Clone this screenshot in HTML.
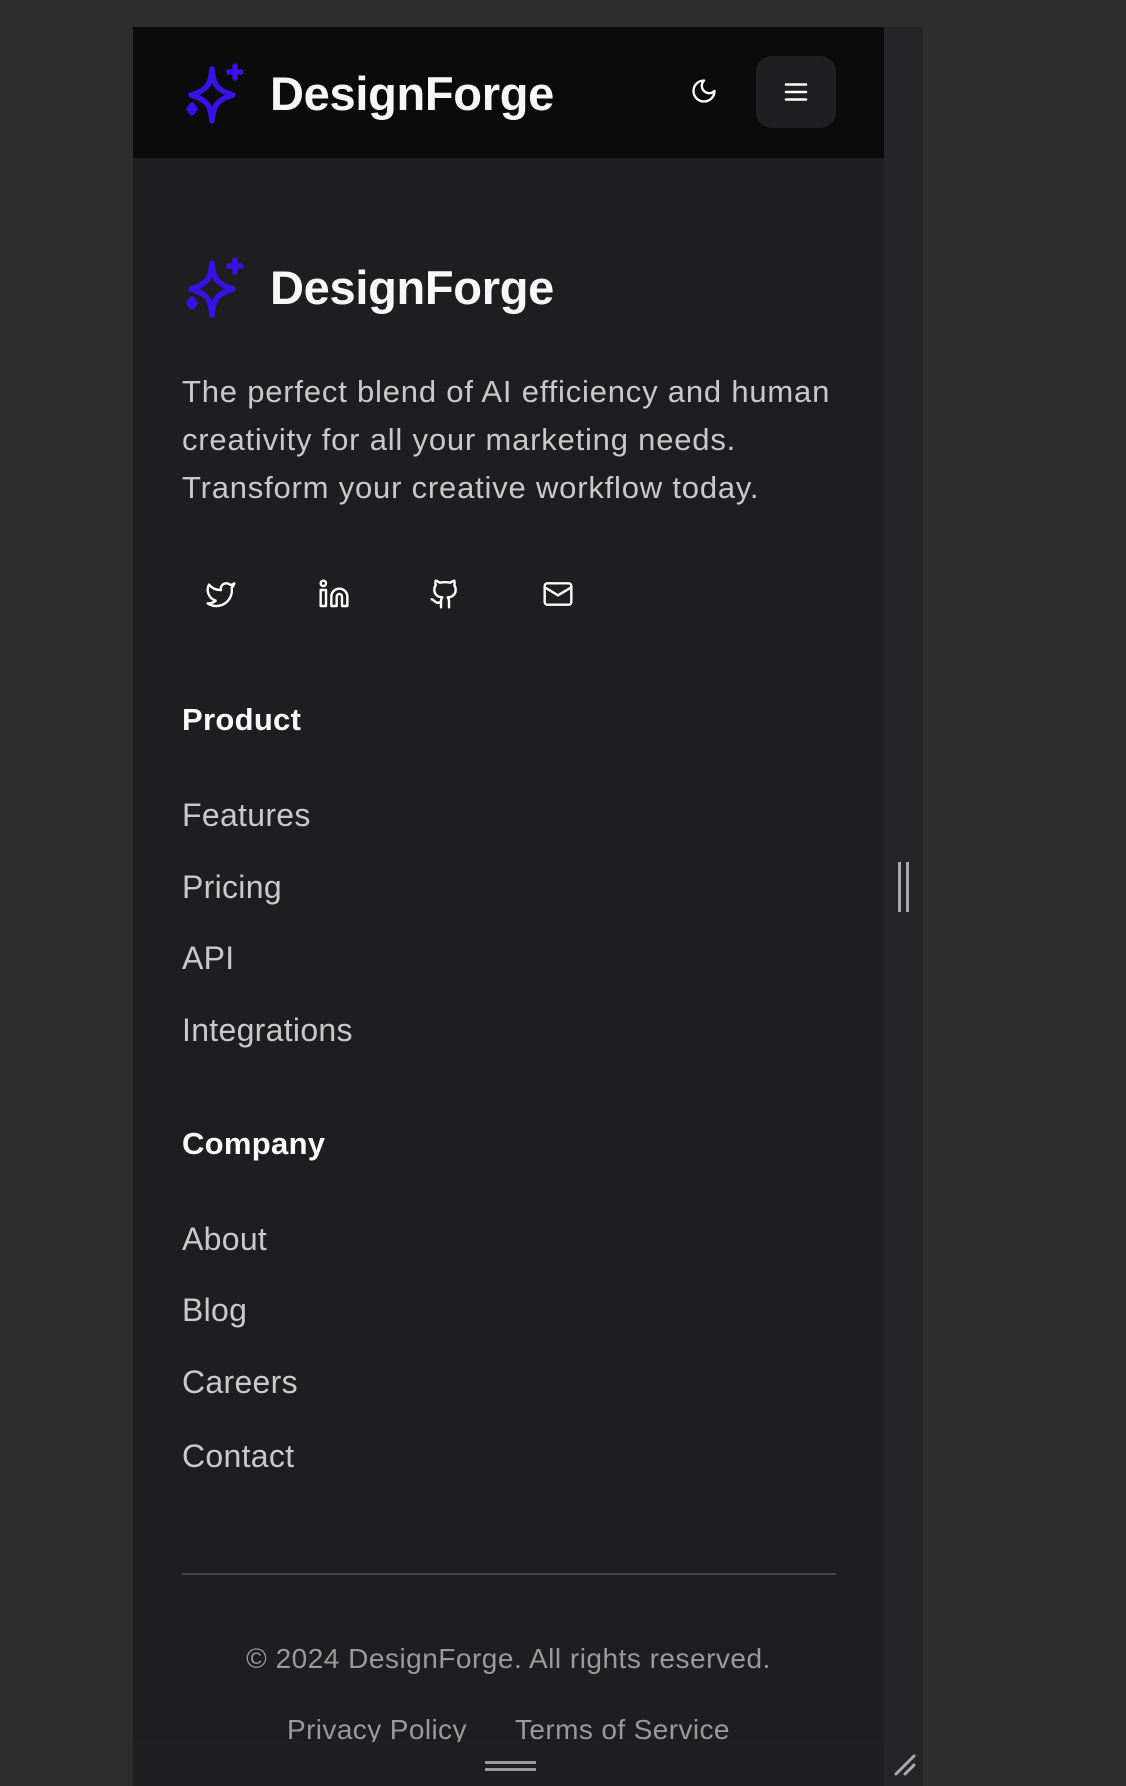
<!DOCTYPE html>
<html><head><meta charset="utf-8"><style>
*{margin:0;padding:0;box-sizing:border-box}
html,body{width:1126px;height:1786px;background:#2d2d2d;overflow:hidden;font-family:"Liberation Sans",Arial,sans-serif}
.frame{position:absolute;left:133px;top:27px;width:790px;height:1759px;background:#252527}
.panel{position:absolute;left:133px;top:27px;width:751px;height:1759px;background:#1e1e20}
.header{position:absolute;left:133px;top:27px;width:751px;height:131px;background:#0b0b0b}
.logo{position:absolute;display:flex;align-items:center}
.logo span{font-weight:bold;font-size:47px;color:#f7f7f7;letter-spacing:-0.3px;margin-left:26px}
.menu{position:absolute;left:756px;top:56px;width:80px;height:72px;border-radius:16px;background:#1f1f21}
p.desc{position:absolute;left:182px;top:368px;width:690px;font-size:31px;letter-spacing:0.8px;line-height:48px;color:#c9c9c9}
.ic{position:absolute;top:578px;width:32px;height:32px}
h3{position:absolute;left:182px;font-size:31px;letter-spacing:0.3px;font-weight:bold;color:#fafafa}
.l{position:absolute;left:182px;font-size:32px;letter-spacing:0.3px;color:#c9c9c9}
.div{position:absolute;left:182px;top:1573px;width:654px;height:2px;background:#434345}
.copy{position:absolute;left:133px;width:751px;top:1643px;text-align:center;font-size:28px;letter-spacing:0.5px;color:#9a9a9a}
.f{position:absolute;top:1714px;font-size:28px;letter-spacing:0.4px;color:#9a9a9a}
.bar{position:absolute;left:133px;top:1742px;width:751px;height:44px;background:#1f1f21}
</style></head><body>
<div class="frame"></div>
<div class="panel"></div>
<div class="header"></div>
<svg width="0" height="0" style="position:absolute"><defs>
<g id="star" fill="none" stroke="#3a10e6" stroke-width="5.5" stroke-linejoin="round" stroke-linecap="round">
<path d="M28 7 C29.5 22 32 28 49 33 C32 38 29.5 44 28 59 C26.5 44 24 38 7 33 C24 28 26.5 22 28 7Z"/>
<path d="M51 4 V16 M45 10 H57"/>
<path d="M8 43 L11 47 L8 51 L5 47 Z" fill="#3a10e6"/>
</g></defs></svg>
<div class="logo" style="left:184px;top:62px"><svg width="60" height="62" viewBox="0 0 60 62"><use href="#star"/></svg><span>DesignForge</span></div>
<svg style="position:absolute;left:690px;top:77px" width="28" height="28" viewBox="0 0 24 24" fill="none" stroke="#fff" stroke-width="2" stroke-linecap="round" stroke-linejoin="round"><path d="M12 3a6 6 0 0 0 9 9 9 9 0 1 1-9-9Z"/></svg>
<div class="menu"><svg style="position:absolute;left:25px;top:21px" width="30" height="30" viewBox="0 0 24 24" fill="none" stroke="#fff" stroke-width="2" stroke-linecap="round"><path d="M4 6h16M4 12h16M4 18h16"/></svg></div>
<div class="logo" style="left:184px;top:256px"><svg width="60" height="62" viewBox="0 0 60 62"><use href="#star"/></svg><span>DesignForge</span></div>
<p class="desc">The perfect blend of AI efficiency and human creativity for all your marketing needs. Transform your creative workflow today.</p>
<svg class="ic" style="left:205px" viewBox="0 0 24 24" fill="none" stroke="#fff" stroke-width="1.8" stroke-linecap="round" stroke-linejoin="round"><path d="M22 4s-.7 2.1-2 3.4c1.6 10-9.4 17.3-18 11.6 2.2.1 4.4-.6 6-2C3 15.5.5 9.6 3 5c2.2 2.6 5.6 4.1 9 4-.9-4.2 4-6.6 7-3.8 1.1 0 3-1.2 3-1.2z"/></svg>
<svg class="ic" style="left:318px" viewBox="0 0 24 24" fill="none" stroke="#fff" stroke-width="1.8" stroke-linecap="round" stroke-linejoin="round"><path d="M16 8a6 6 0 0 1 6 6v7h-4v-7a2 2 0 0 0-4 0v7h-4v-7a6 6 0 0 1 6-6z"/><rect x="2" y="9" width="4" height="12"/><circle cx="4" cy="4" r="2"/></svg>
<svg class="ic" style="left:429px" viewBox="0 0 24 24" fill="none" stroke="#fff" stroke-width="1.8" stroke-linecap="round" stroke-linejoin="round"><path d="M15 22v-4a4.8 4.8 0 0 0-1-3.5c3 0 6-2 6-5.5.08-1.25-.27-2.48-1-3.5.28-1.15.28-2.35 0-3.5 0 0-1 0-3 1.5-2.64-.5-5.36-.5-8 0C6 2 5 2 5 2c-.3 1.15-.3 2.35 0 3.5A5.4 5.4 0 0 0 4 9c0 3.5 3 5.5 6 5.5-.39.49-.68 1.05-.85 1.650-.17.6-.22 1.23-.15 1.85v4"/><path d="M9 18c-4.51 2-5-2-7-2"/></svg>
<svg class="ic" style="left:542px" viewBox="0 0 24 24" fill="none" stroke="#fff" stroke-width="1.8" stroke-linecap="round" stroke-linejoin="round"><rect x="2" y="4" width="20" height="16" rx="2"/><path d="m22 7-10 6L2 7"/></svg>
<h3 style="top:702px">Product</h3>
<div class="l" style="top:797px">Features</div>
<div class="l" style="top:869px">Pricing</div>
<div class="l" style="top:940px">API</div>
<div class="l" style="top:1012px">Integrations</div>
<h3 style="top:1126px">Company</h3>
<div class="l" style="top:1221px">About</div>
<div class="l" style="top:1292px">Blog</div>
<div class="l" style="top:1364px">Careers</div>
<div class="l" style="top:1438px">Contact</div>
<div class="div"></div>
<div class="copy">© 2024 DesignForge. All rights reserved.</div>
<div class="f" style="left:287px">Privacy Policy</div>
<div class="f" style="left:515px">Terms of Service</div>
<div class="bar"></div>
<div style="position:absolute;left:485px;top:1761px;width:51px;height:3px;background:#9a9a9a"></div>
<div style="position:absolute;left:485px;top:1768px;width:51px;height:3px;background:#9a9a9a"></div>
<div style="position:absolute;left:898px;top:862px;width:3px;height:50px;background:#aaa"></div>
<div style="position:absolute;left:906px;top:862px;width:3px;height:50px;background:#aaa"></div>
<svg style="position:absolute;left:892px;top:1752px" width="26" height="26" viewBox="0 0 26 26" stroke="#aaa" stroke-width="3" stroke-linecap="round"><path d="M4 22 L22 4 M13 22 L22 13"/></svg>
</body></html>
